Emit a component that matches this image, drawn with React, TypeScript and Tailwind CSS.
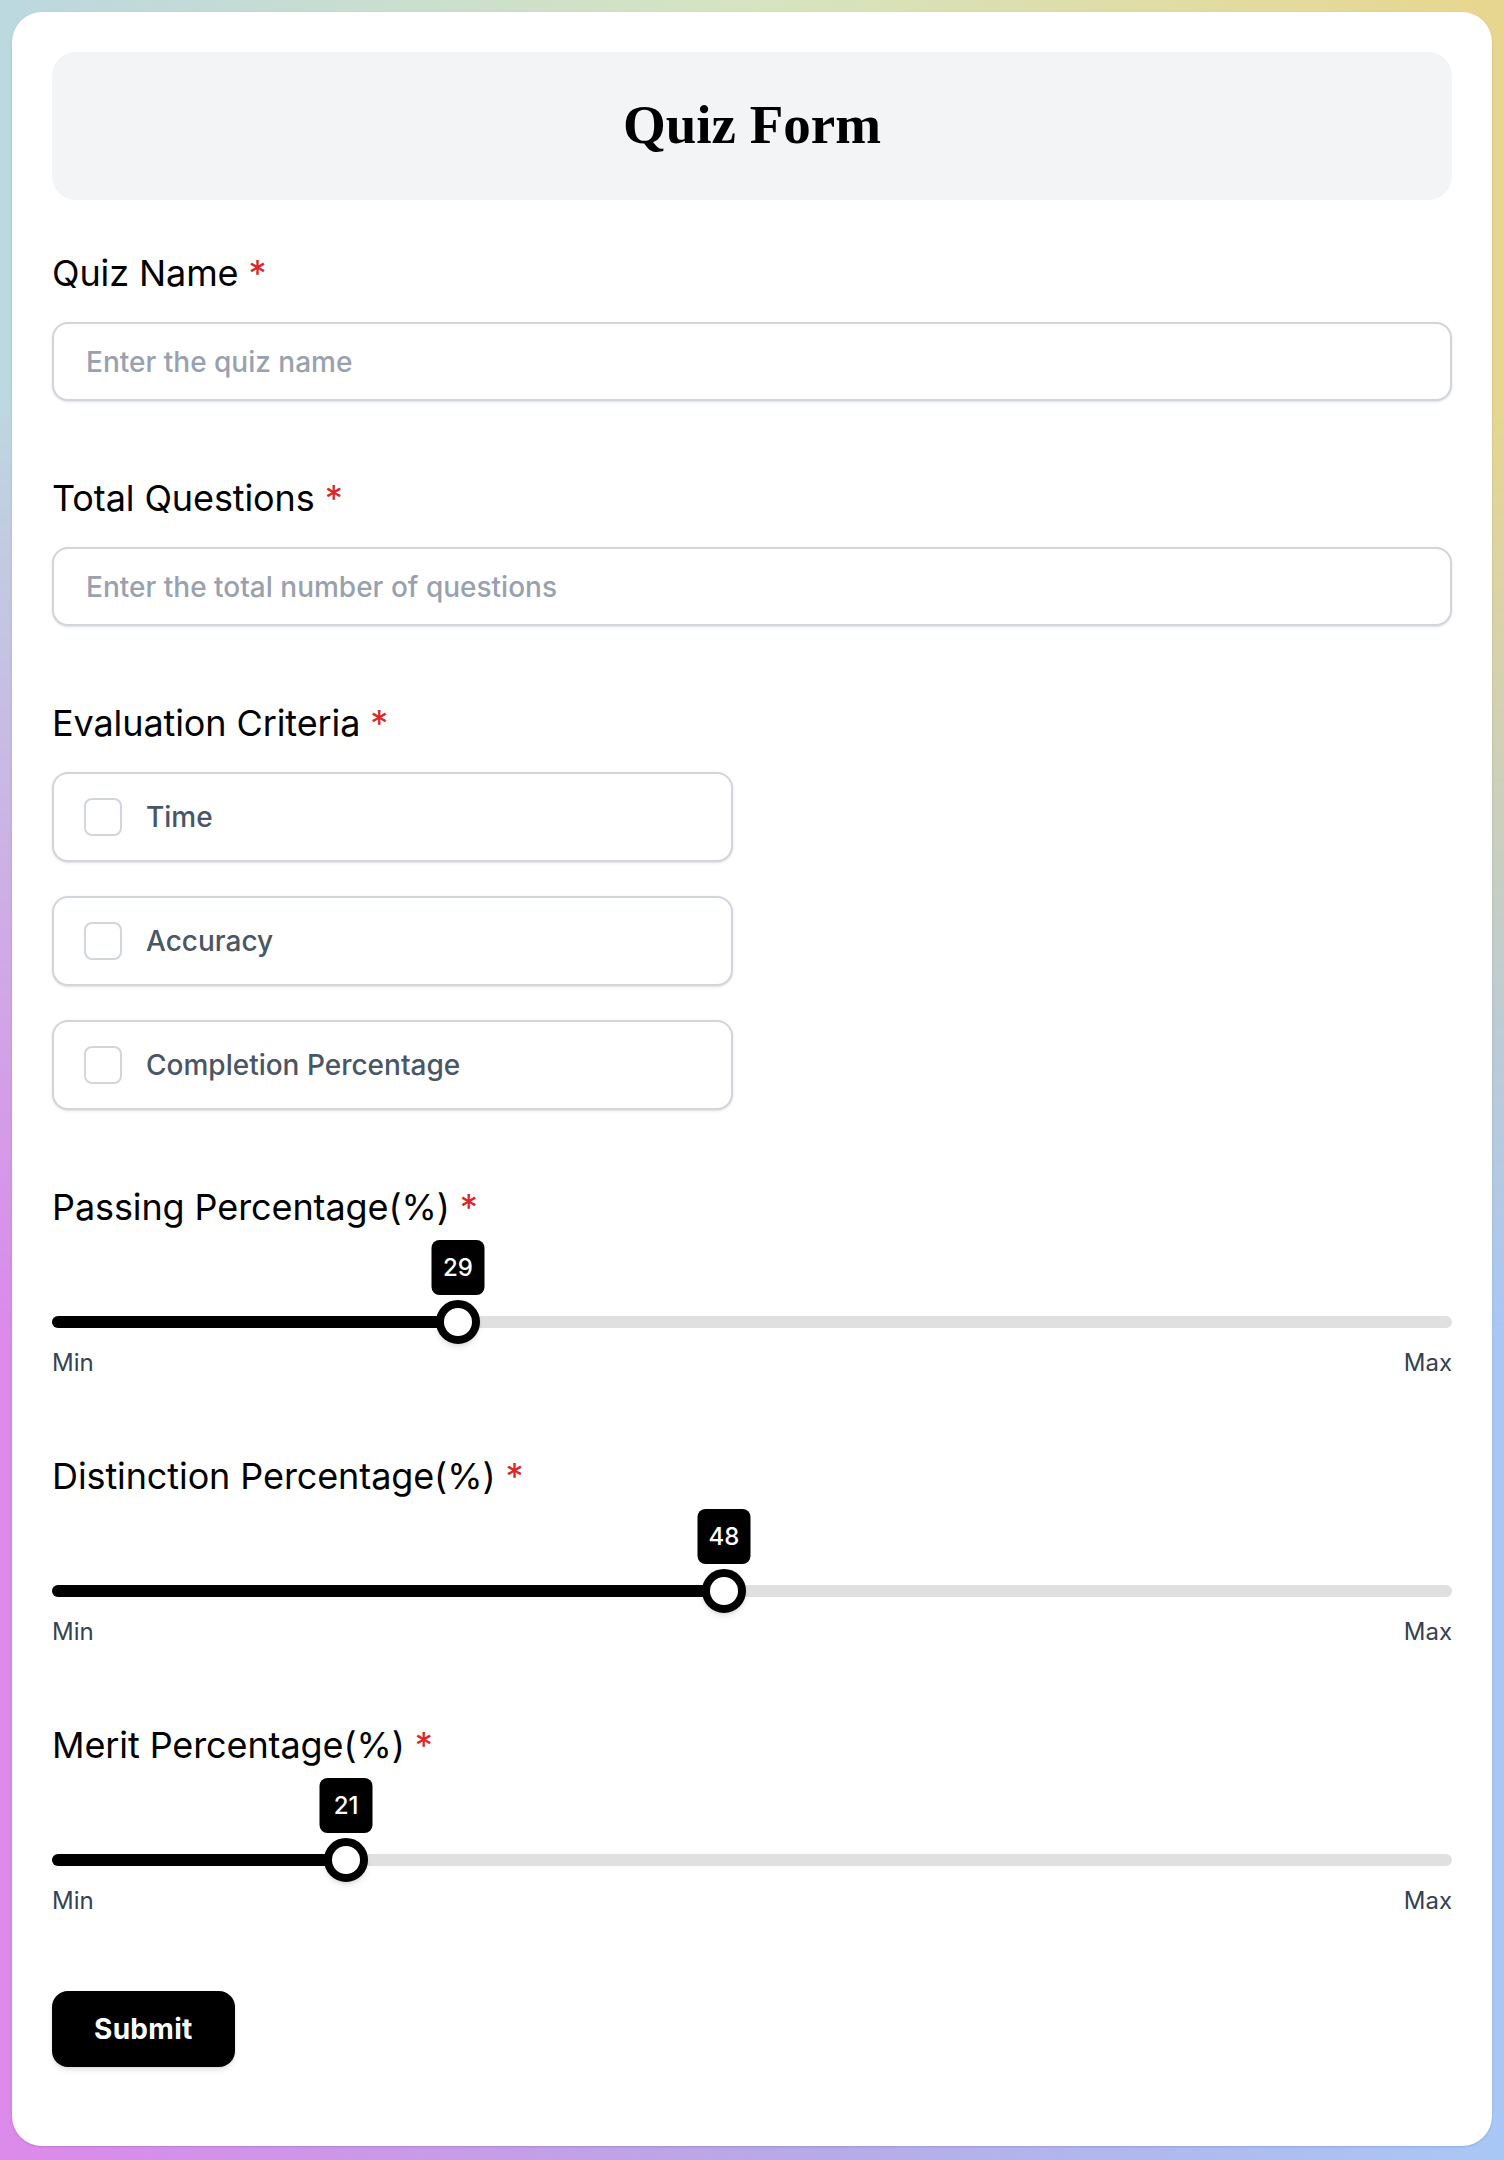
import React from 'react';

const criteria = ['Time', 'Accuracy', 'Completion Percentage'];

const sliders = [
  { label: 'Passing Percentage(%)', value: 29 },
  { label: 'Distinction Percentage(%)', value: 48 },
  { label: 'Merit Percentage(%)', value: 21 },
];

function FieldLabel({ text }: { text: string }) {
  return (
    <label className="block text-[36px] leading-[44px] tracking-[-0.1px] text-black">
      {text}
      <span className="ml-2.5 text-[#dc2626]">*</span>
    </label>
  );
}

function TextField({ label, placeholder }: { label: string; placeholder: string }) {
  return (
    <div className="flex flex-col gap-[27px]">
      <FieldLabel text={label} />
      <input
        type="text"
        placeholder={placeholder}
        className="h-[79px] w-full rounded-2xl border-2 border-gray-300 bg-white px-8 text-[28px] font-medium text-gray-900 shadow-sm placeholder:text-gray-400 focus:outline-none"
      />
    </div>
  );
}

function PercentSlider({ label, value }: { label: string; value: number }) {
  return (
    <div className="flex flex-col">
      <FieldLabel text={label} />
      {/* Track */}
      <div className="relative mt-[87px] h-3 rounded-full bg-[#e0e0e0]">
        <div className="h-full rounded-full bg-black" style={{ width: `${value}%` }} />
        {/* Thumb + value bubble */}
        <div
          className="absolute top-1/2 -translate-x-1/2 -translate-y-1/2"
          style={{ left: `${value}%` }}
        >
          <div className="absolute bottom-full left-1/2 mb-[5px] flex h-[55px] w-[53px] -translate-x-1/2 items-center justify-center rounded-lg bg-black text-[24px] font-medium text-white">
            {value}
          </div>
          <div className="h-11 w-11 rounded-full border-[8px] border-black bg-white shadow-md" />
        </div>
      </div>
      <div className="mt-[19px] flex justify-between text-[24px] leading-8 text-gray-700">
        <span>Min</span>
        <span>Max</span>
      </div>
    </div>
  );
}

export default function App() {
  return (
    <div className="relative min-h-screen bg-[linear-gradient(to_right,#dc8aea,#b9a8e6_50%,#a8c8f6)] p-3 font-['Inter',sans-serif]">
      {/* Upper colour wash, faded out toward the bottom */}
      <div className="pointer-events-none absolute inset-0 bg-[linear-gradient(to_right,#bcd8e0,#d6e4c0_50%,#e8d68e)] [mask-image:linear-gradient(to_bottom,black_0%,black_18%,transparent_62%)]" />

      <div className="relative rounded-[30px] bg-white px-10 pt-10 pb-[79px] shadow-sm">
        {/* Header */}
        <div className="flex h-[148px] items-center justify-center rounded-3xl bg-gray-100">
          <h1 className="-mt-1 font-['Liberation_Serif',serif] text-[55px] font-bold leading-none text-black">
            Quiz Form
          </h1>
        </div>

        {/* Form */}
        <form className="mt-[51px] flex flex-col gap-[75px]" onSubmit={e => e.preventDefault()}>
          <TextField label="Quiz Name" placeholder="Enter the quiz name" />
          <TextField label="Total Questions" placeholder="Enter the total number of questions" />

          <div className="flex flex-col">
            <FieldLabel text="Evaluation Criteria" />
            <div className="mt-[27px] flex flex-col gap-[34px]">
              {criteria.map(c => (
                <label
                  key={c}
                  className="flex h-[90px] w-[681px] items-center gap-6 rounded-2xl border-2 border-gray-300 bg-white pl-[30px] shadow-sm"
                >
                  <span className="h-[38px] w-[38px] rounded-lg border-2 border-gray-300 bg-white" />
                  <span className="text-[28px] font-medium text-gray-600">{c}</span>
                </label>
              ))}
            </div>
          </div>

          {sliders.map(s => (
            <PercentSlider key={s.label} label={s.label} value={s.value} />
          ))}

          <div className="-mt-px">
            <button
              type="submit"
              className="h-[76px] rounded-2xl bg-black px-[42px] text-[28px] font-bold tracking-[0.3px] text-white shadow-md"
            >
              Submit
            </button>
          </div>
        </form>
      </div>
    </div>
  );
}
